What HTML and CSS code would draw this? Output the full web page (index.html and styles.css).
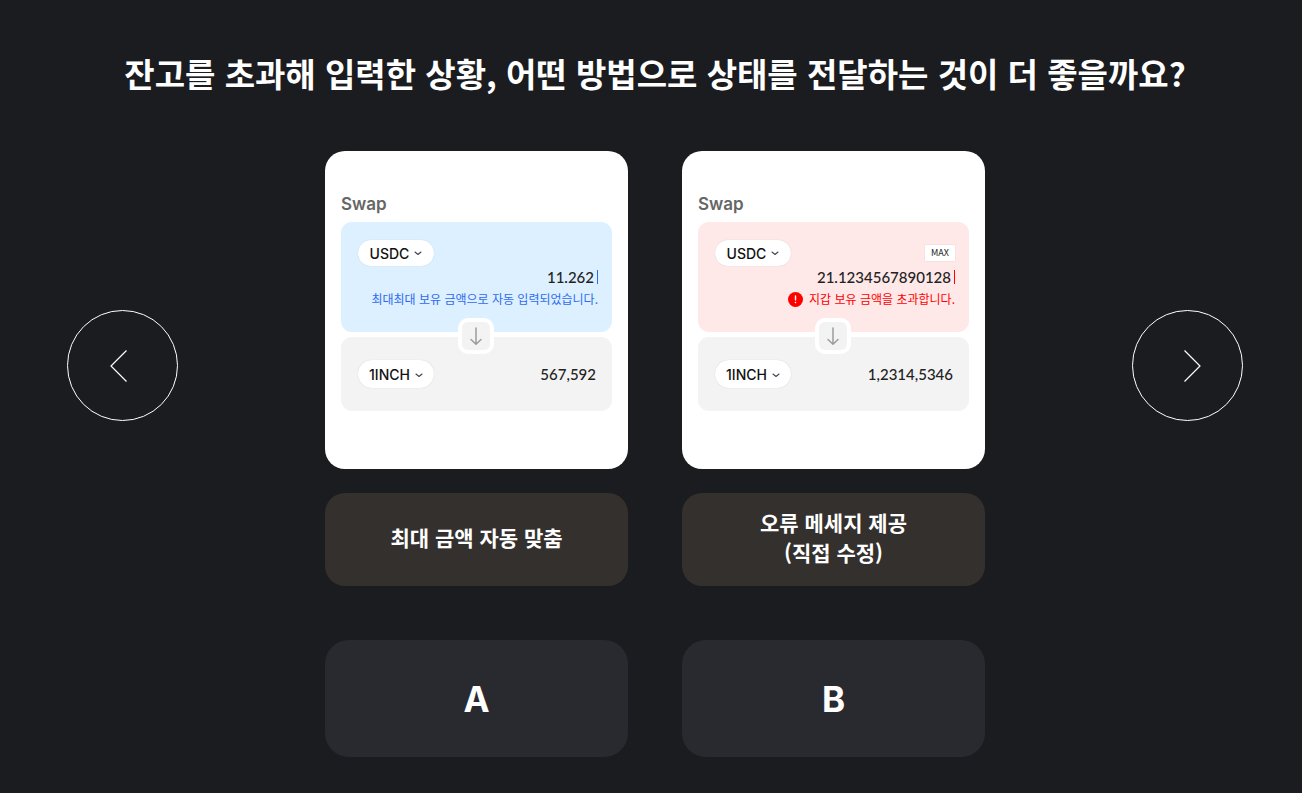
FILE: index.html
```html
<!DOCTYPE html>
<html lang="ko">
<head>
<meta charset="utf-8">
<meta name="viewport" content="width=device-width, initial-scale=1">
<title>Swap A/B</title>
<link rel="stylesheet" href="styles.css">
</head>
<body>
<main class="page">
  <h1 class="question">잔고를 초과해 입력한 상황, 어떤 방법으로 상태를 전달하는 것이 더 좋을까요?</h1>
  <div class="stage">
    <button class="nav" type="button" aria-label="이전">
      <svg width="109" height="109" viewBox="0 0 109 109" fill="none" stroke="#fff" stroke-width="1.2"><path d="M58.5 39.5 43 55 58.5 70.5"/></svg>
    </button>
    <div class="options">
      <section class="option">
        <article class="card">
          <h2 class="card-title">Swap</h2>
          <div class="panels">
            <div class="panel pay info">
              <div class="row">
                <button class="token" type="button">USDC <svg width="8" height="8" viewBox="0 0 8 8" fill="none" stroke="#444455" stroke-width="1.1" stroke-linecap="round" stroke-linejoin="round"><path d="M1 3 4 5.5 7 3"/></svg></button>
              </div>
              <div class="amount-row"><input class="amount" type="text" value="11.262" aria-label="USDC 금액"><span class="caret"></span></div>
              <p class="message">최대최대 보유 금액으로 자동 입력되었습니다.</p>
            </div>
            <div class="panel receive">
              <button class="token" type="button">1INCH <svg width="8" height="8" viewBox="0 0 8 8" fill="none" stroke="#444455" stroke-width="1.1" stroke-linecap="round" stroke-linejoin="round"><path d="M1 4 4 6.5 7 4"/></svg></button>
              <output class="result">567,592</output>
            </div>
            <button class="switch" type="button" aria-label="방향 전환"><svg width="28" height="28" viewBox="0 0 28 28" fill="none" stroke="#9c9c9c" stroke-width="1.5" stroke-linecap="round" stroke-linejoin="round"><path d="M14 6v16M9 17.5l5 4.8 5-4.8"/></svg></button>
          </div>
        </article>
        <p class="caption">최대 금액 자동 맞춤</p>
        <button class="vote" type="button">A</button>
      </section>
      <section class="option">
        <article class="card">
          <h2 class="card-title">Swap</h2>
          <div class="panels">
            <div class="panel pay error">
              <div class="row">
                <button class="token" type="button">USDC <svg width="8" height="8" viewBox="0 0 8 8" fill="none" stroke="#444455" stroke-width="1.1" stroke-linecap="round" stroke-linejoin="round"><path d="M1 3 4 5.5 7 3"/></svg></button>
                <button class="max" type="button">MAX</button>
              </div>
              <div class="amount-row"><input class="amount" type="text" value="21.1234567890128" aria-label="USDC 금액"><span class="caret"></span></div>
              <p class="message"><svg width="15" height="15" viewBox="0 0 15 15"><circle cx="7.5" cy="7.5" r="7.5" fill="#f00"/><path d="M7.5 4v4" stroke="#fff" stroke-width="1.4" stroke-linecap="round"/><circle cx="7.5" cy="10.5" r=".8" fill="#fff"/></svg>지갑 보유 금액을 초과합니다.</p>
            </div>
            <div class="panel receive">
              <button class="token" type="button">1INCH <svg width="8" height="8" viewBox="0 0 8 8" fill="none" stroke="#444455" stroke-width="1.1" stroke-linecap="round" stroke-linejoin="round"><path d="M1 4 4 6.5 7 4"/></svg></button>
              <output class="result">1,2314,5346</output>
            </div>
            <button class="switch" type="button" aria-label="방향 전환"><svg width="28" height="28" viewBox="0 0 28 28" fill="none" stroke="#9c9c9c" stroke-width="1.5" stroke-linecap="round" stroke-linejoin="round"><path d="M14 6v16M9 17.5l5 4.8 5-4.8"/></svg></button>
          </div>
        </article>
        <p class="caption">오류 메세지 제공<br>(직접 수정)</p>
        <button class="vote" type="button">B</button>
      </section>
    </div>
    <button class="nav" type="button" aria-label="다음">
      <svg width="109" height="109" viewBox="0 0 109 109" fill="none" stroke="#fff" stroke-width="1.2"><path d="M51.5 39.5 67 55 51.5 70.5"/></svg>
    </button>
  </div>
</main>
</body>
</html>
```
FILE: styles.css
```css
* { box-sizing: border-box; }
body {
  margin: 0;
  background: #1b1c1f;
  color: #fff;
  font-family: "Noto Sans CJK KR", sans-serif;
}
h1, h2, p { margin: 0; }
button, input { font: inherit; color: inherit; border: 0; padding: 0; background: none; }
button { cursor: pointer; }
svg { display: block; flex: none; }

.page { padding: 47px 59px 36px 67px; }
.question {
  margin-bottom: 52px;
  text-align: center;
  font-size: 33px;
  line-height: 52px;
  font-weight: 700;
}
.stage {
  display: flex;
  justify-content: space-between;
  align-items: flex-start;
  gap: 32px;
}
.nav {
  flex: none;
  width: 111px;
  height: 111px;
  margin-top: 159px;
  border: 1px solid #fff;
  border-radius: 50%;
}
.options {
  flex: 1;
  max-width: 660px;
  display: grid;
  grid-template-columns: 1fr 1fr;
  gap: 54px;
}
.option { display: flex; flex-direction: column; }

.card {
  min-height: 318px;
  padding: 41px 16px;
  border-radius: 20px;
  background: #fff;
  color: #222;
}
.card-title {
  margin-bottom: 6px;
  font-family: Inter, sans-serif;
  font-size: 17px;
  line-height: 24px;
  font-weight: 600;
  color: #666;
}
.panels { position: relative; display: grid; gap: 5px; }
.panel { border-radius: 11px; }
.pay { height: 110px; padding: 18px 14px 0 17px; }
.info { background: #dcf0ff; --accent: #2f6bf0; }
.error { background: #ffe8e8; --accent: #f00; }
.row { display: flex; align-items: center; justify-content: space-between; }
.token {
  display: flex;
  align-items: center;
  justify-content: center;
  gap: 5px;
  width: 76px;
  height: 26px;
  border-radius: 14px;
  background: #fff;
  color: #111;
  font-family: Inter, sans-serif;
  font-size: 14px;
  font-weight: 500;
  box-shadow: 0 0 1px #0003;
}
.receive .token { height: 28px; }
.max {
  width: 30px;
  height: 16px;
  background: #fff;
  color: #222;
  font-size: 9px;
  line-height: 16px;
  box-shadow: 0 0 1px #0003;
}
.amount-row { display: flex; align-items: center; gap: 3px; height: 22px; }
.amount, .result {
  font-family: "Lato Medium", Lato, sans-serif;
  font-size: 15px;
  font-weight: 500;
}
.amount {
  flex: 1;
  min-width: 0;
  height: 22px;
  text-align: right;
}
.caret { width: 1px; height: 14px; background: var(--accent); }
.message {
  display: flex;
  align-items: center;
  justify-content: flex-end;
  gap: 6px;
  font-size: 12px;
  line-height: 22px;
  white-space: nowrap;
  color: var(--accent);
}
.receive {
  display: flex;
  align-items: center;
  justify-content: space-between;
  height: 74px;
  padding: 0 16px 0 17px;
  background: #f3f3f3;
}
.switch {
  position: absolute;
  top: 96px;
  left: calc(50% - 19px);
  width: 36px;
  height: 36px;
  border: 4px solid #fff;
  border-radius: 10px;
  background: #f3f3f3;
}
.caption {
  display: grid;
  place-items: center;
  align-content: center;
  min-height: 93px;
  margin: 24px 0 54px;
  padding-bottom: 6px;
  border-radius: 20px;
  background: #34302d;
  font-size: 21px;
  line-height: 30px;
  font-weight: 700;
  text-align: center;
}
.vote {
  min-height: 117px;
  border-radius: 24px;
  background: #292a2f;
  font-family: Inter, sans-serif;
  font-size: 35px;
  font-weight: 700;
}
```
